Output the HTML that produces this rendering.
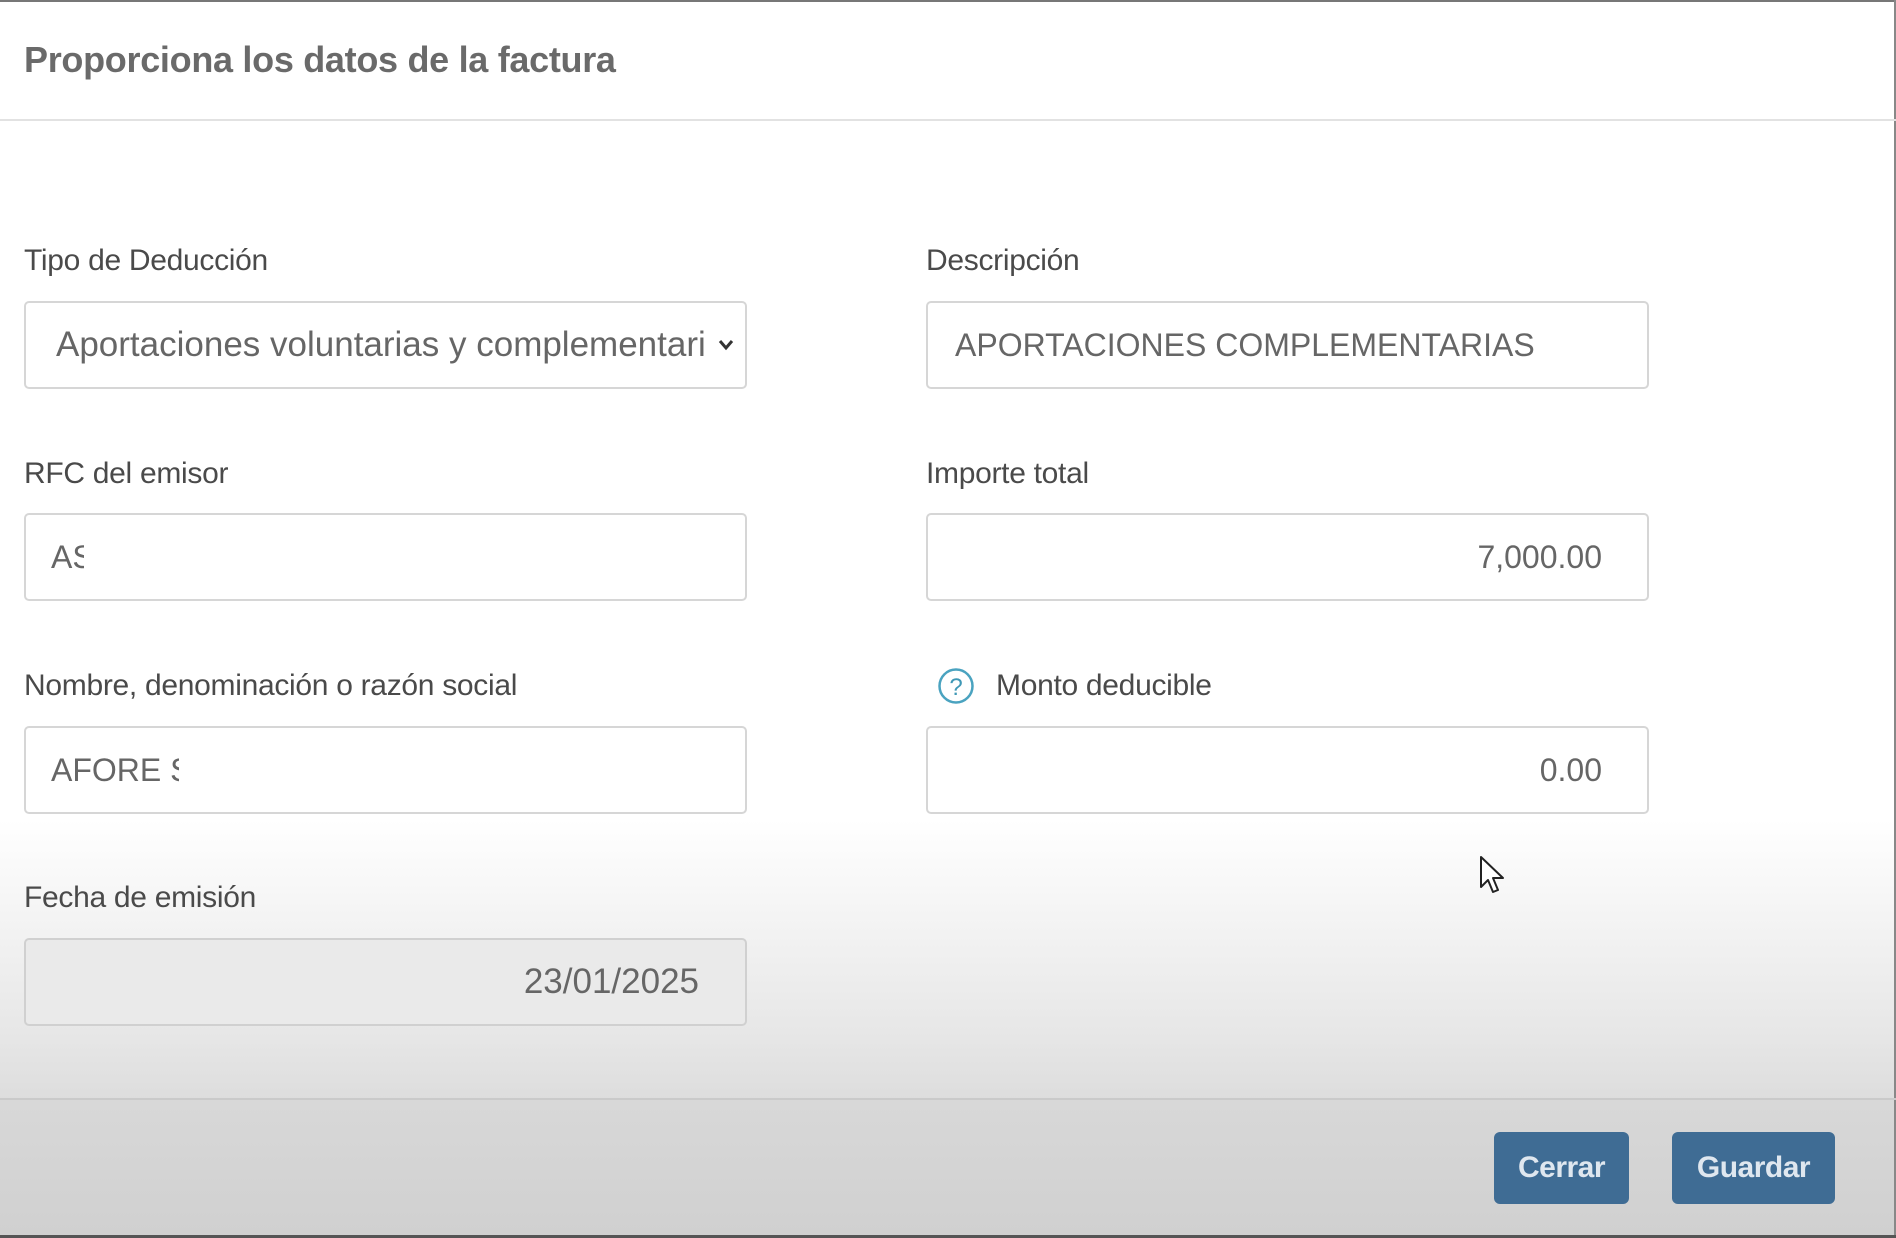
<!DOCTYPE html>
<html><head><meta charset="utf-8">
<style>
html,body{margin:0;padding:0}
body{width:1896px;height:1238px;position:relative;overflow:hidden;font-family:"Liberation Sans",Arial,sans-serif;
background:linear-gradient(to bottom,#fff 0,#fff 820px,#e6e6e6 1040px,#dddddd 1099px,#d8d8d8 1100px,#d0d0d0 1238px);}
.topline{position:absolute;left:0;top:0;width:1896px;height:2px;background:#777}
.botline{position:absolute;left:0;top:1235px;width:1896px;height:3px;background:#555}
.rline{position:absolute;right:0;top:0;width:2px;height:1238px;background:#888}
.title{position:absolute;left:24px;top:39px;font-size:36px;font-weight:bold;color:#6a6a6a;letter-spacing:-0.3px}
.hsep{position:absolute;left:0;top:119px;width:1896px;height:2px;background:#e2e2e2}
.fsep{position:absolute;left:0;top:1098px;width:1896px;height:2px;background:#cacaca}
.lbl{position:absolute;font-size:30px;color:#4a4a4a;letter-spacing:-0.3px}
.box{position:absolute;width:723px;height:88px;border:2px solid #d6d6d6;border-radius:5px;background:#fff;box-sizing:border-box;
font-size:32px;color:#666;line-height:84px;overflow:hidden;white-space:nowrap}
.l{left:24px}.r{left:926px}
.btn{position:absolute;top:1132px;height:72px;background:#3f6c94;border-radius:6px;color:#dfe7ef;font-weight:bold;font-size:30px;text-align:center;line-height:72px;letter-spacing:-0.5px}
</style></head><body>
<div class="topline"></div>
<div class="rline"></div>
<div class="title">Proporciona los datos de la factura</div>
<div class="hsep"></div>

<div class="lbl" style="left:24px;top:244px">Tipo de Deducción</div>
<div class="box l" style="top:301px;padding-left:30px;font-size:35px">Aportaciones voluntarias y complementari</div>
<div style="position:absolute;left:706px;top:320px;width:30px;height:50px;background:#fff"></div>
<svg style="position:absolute;left:718px;top:339px" width="16" height="12" viewBox="0 0 16 12"><path d="M2 2 L8 9 L14 2" stroke="#333" stroke-width="3" fill="none"/></svg>

<div class="lbl" style="left:926px;top:244px">Descripción</div>
<div class="box r" style="top:301px;padding-left:27px">APORTACIONES COMPLEMENTARIAS</div>

<div class="lbl" style="left:24px;top:457px">RFC del emisor</div>
<div class="box l" style="top:513px;padding-left:25px"><span style="display:inline-block;width:33px;overflow:hidden;vertical-align:top">AS</span></div>

<div class="lbl" style="left:926px;top:457px">Importe total</div>
<div class="box r" style="top:513px;text-align:right;padding-right:45px">7,000.00</div>

<div class="lbl" style="left:24px;top:669px">Nombre, denominación o razón social</div>
<div class="box l" style="top:726px;padding-left:25px"><span style="display:inline-block;width:128px;overflow:hidden;vertical-align:top">AFORE SURA</span></div>

<svg style="position:absolute;left:937px;top:667px" width="38" height="38" viewBox="0 0 38 38"><circle cx="19" cy="19" r="16.5" stroke="#4aa3c0" stroke-width="2.5" fill="none"/><text x="19" y="28" text-anchor="middle" font-family="Liberation Sans" font-size="24" fill="#3f98b6">?</text></svg>
<div class="lbl" style="left:996px;top:669px">Monto deducible</div>
<div class="box r" style="top:726px;text-align:right;padding-right:45px">0.00</div>

<div class="lbl" style="left:24px;top:881px">Fecha de emisión</div>
<div class="box l" style="top:938px;text-align:right;padding-right:46px;background:#eaeaea;border-color:#d0d0d0;font-size:35px">23/01/2025</div>

<svg style="position:absolute;left:1479px;top:855px" width="30" height="44" viewBox="0 0 30 44"><path d="M2 2 L2 32 L9 25 L14 37 L19 35 L14 23 L24 23 Z" fill="#fff" stroke="#222" stroke-width="2" stroke-linejoin="round"/></svg>

<div class="fsep"></div>
<div class="btn" style="left:1494px;width:135px">Cerrar</div>
<div class="btn" style="left:1672px;width:163px">Guardar</div>
<div class="botline"></div>
</body></html>
